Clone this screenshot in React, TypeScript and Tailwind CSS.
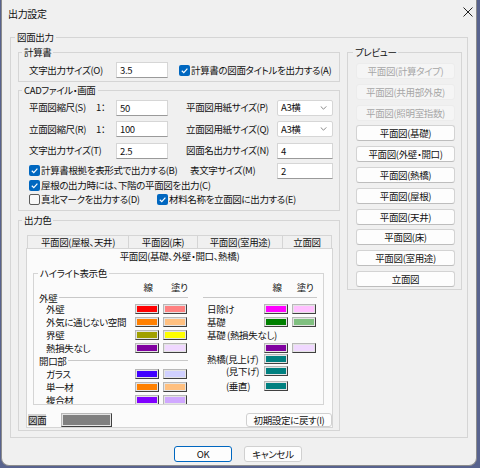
import type { ReactNode } from "react";

type Swatch = { line: string; fill?: string };

const leftRows: { kind: "section" | "row"; label: string; sw?: Swatch }[] = [
  { kind: "section", label: "外壁" },
  { kind: "row", label: "外壁", sw: { line: "bg-[#ff0000]", fill: "bg-[#ff8080]" } },
  { kind: "row", label: "外気に通じない空間", sw: { line: "bg-[#ff8000]", fill: "bg-[#ffc080]" } },
  { kind: "row", label: "界壁", sw: { line: "bg-[#a0a000]", fill: "bg-[#ffff00]" } },
  { kind: "row", label: "熱損失なし", sw: { line: "bg-[#8000a0]", fill: "bg-[#f0d8ff]" } },
  { kind: "section", label: "開口部" },
  { kind: "row", label: "ガラス", sw: { line: "bg-[#4000ff]", fill: "bg-[#d0d0ff]" } },
  { kind: "row", label: "単一材", sw: { line: "bg-[#ff8000]", fill: "bg-[#ffc080]" } },
  { kind: "row", label: "複合材", sw: { line: "bg-[#8000ff]", fill: "bg-[#d0a8ff]" } },
];

const previewButtons = [
  { label: "平面図(計算タイプ)", disabled: true },
  { label: "平面図(共用部外皮)", disabled: true },
  { label: "平面図(照明室指数)", disabled: true },
  { label: "平面図(基礎)" },
  { label: "平面図(外壁・開口)" },
  { label: "平面図(熱橋)" },
  { label: "平面図(屋根)" },
  { label: "平面図(天井)" },
  { label: "平面図(床)" },
  { label: "平面図(室用途)" },
  { label: "立面図" },
];

function Group({ label, className, legendClass, children }: { label: string; className: string; legendClass: string; children?: ReactNode }) {
  return (
    <fieldset className={`border border-[#d5d5d5] shrink-0 ${className}`}>
      <legend className={`px-[2px] leading-[14px] ${legendClass}`}>{label}</legend>
      {children}
    </fieldset>
  );
}

function Check({ checked }: { checked: boolean }) {
  if (!checked) {
    return <span className="w-[11px] h-[11px] rounded-[2px] border border-[#5c5c5c] bg-[#f8f8f8] shrink-0" />;
  }
  return (
    <span className="w-[11px] h-[11px] rounded-[2px] bg-[#0067c0] flex items-center justify-center shrink-0">
      <svg viewBox="0 0 10 10" className="w-[9px] h-[9px]">
        <path d="M2 5.3 L4.2 7.4 L8.2 2.8" fill="none" stroke="white" strokeWidth="1.3" />
      </svg>
    </span>
  );
}

function Input({ value, w }: { value: string; w: string }) {
  return (
    <span className={`${w} h-[16px] bg-white border border-[#d6d6d6] border-b-[#9a9a9a] pl-[3px] leading-[14px] shrink-0`}>
      {value}
    </span>
  );
}

function Select({ value }: { value: string }) {
  return (
    <span className="w-[56px] h-[16px] bg-white border border-[#d6d6d6] rounded-[2px] pl-[3px] pr-[5px] flex items-center justify-between shrink-0">
      <span>{value}</span>
      <svg viewBox="0 0 8 5" className="w-[7px] h-[4px]">
        <path d="M0.5 0.5 L4 4 L7.5 0.5" fill="none" stroke="#6a6a6a" strokeWidth="1" />
      </svg>
    </span>
  );
}

function Sw({ color, className = "" }: { color: string; className?: string }) {
  return (
    <span className={`block w-[24px] h-[10px] bg-[#e4e4e4] border border-[#b8b8b8] border-r-[#404040] border-b-[#404040] p-[1px] shrink-0 ${className}`}>
      <span className={`block w-full h-full ${color}`} />
    </span>
  );
}

export default function App() {
  return (
    <div className="w-[480px] h-[468px] bg-[#58638e] text-[9.5px] tracking-[-0.35px] whitespace-nowrap text-[#111] font-['Noto_Sans_CJK_JP',sans-serif] [font-feature-settings:'palt']">
      <div className="ml-[1px] w-[476px] h-[466px] bg-[#f0f0f0] border-x border-b border-[#8c8c8c] rounded-b-[8px] flex flex-col">
        {/* title bar */}
        <div className="h-[26px] shrink-0 flex items-center justify-between pl-[6px] pr-[3px]">
          <span className="text-[10px]">出力設定</span>
          <svg viewBox="0 0 10 10" className="w-[10px] h-[10px] mb-[2px]">
            <path d="M0.5 0.5 L9.5 9.5 M9.5 0.5 L0.5 9.5" stroke="#222" strokeWidth="1" />
          </svg>
        </div>

        <Group label="図面出力" className="ml-[8px] mt-[4px] w-[458px] h-[408px]" legendClass="ml-[4px]">
          <div className="flex gap-[7px] pl-[7px] mt-[1px]">
            {/* left column */}
            <div className="w-[322px] flex flex-col">
              <Group label="計算書" className="w-[322px] h-[37px]" legendClass="ml-[3px]">
                <div className="mt-[3px] pl-[10px] h-[16px] flex items-center">
                  <span className="w-[87px]">文字出力サイズ(O)</span>
                  <Input value="3.5" w="w-[52px]" />
                  <span className="ml-[11px] flex items-center gap-[1px]">
                    <Check checked />
                    <span>計算書の図面タイトルを出力する(A)</span>
                  </span>
                </div>
              </Group>

              <Group label="CADファイル・画面" className="mt-[1px] w-[322px] h-[128px]" legendClass="ml-[3px]">
                <div className="pl-[10px] flex flex-col">
                  <div className="mt-[2.5px] h-[16px] flex items-center">
                    <span className="w-[67px]">平面図縮尺(S)</span>
                    <span className="w-[20px]">1：</span>
                    <Input value="50" w="w-[52px]" />
                    <span className="ml-[18px] w-[91px]">平面図用紙サイズ(P)</span>
                    <Select value="A3横" />
                  </div>
                  <div className="mt-[5.5px] h-[16px] flex items-center">
                    <span className="w-[67px]">立面図縮尺(R)</span>
                    <span className="w-[20px]">1：</span>
                    <Input value="100" w="w-[52px]" />
                    <span className="ml-[18px] w-[91px]">立面図用紙サイズ(Q)</span>
                    <Select value="A3横" />
                  </div>
                  <div className="mt-[5.5px] h-[16px] flex items-center">
                    <span className="w-[87px]">文字出力サイズ(T)</span>
                    <Input value="2.5" w="w-[52px]" />
                    <span className="ml-[18px] w-[91px]">図面名出力サイズ(N)</span>
                    <Input value="4" w="w-[56px]" />
                  </div>
                  <div className="mt-[4px] h-[16px] flex items-center">
                    <span className="w-[161px] flex items-center gap-[1px]">
                      <Check checked />
                      <span>計算書根拠を表形式で出力する(B)</span>
                    </span>
                    <span className="w-[87px]">表文字サイズ(M)</span>
                    <Input value="2" w="w-[56px]" />
                  </div>
                  <div className="h-[13px] flex items-center gap-[1px]">
                    <Check checked />
                    <span>屋根の出力時には、下階の平面図を出力(C)</span>
                  </div>
                  <div className="h-[16px] flex items-center">
                    <span className="w-[128px] flex items-center gap-[1px]">
                      <Check checked={false} />
                      <span>真北マークを出力する(D)</span>
                    </span>
                    <span className="flex items-center gap-[1px]">
                      <Check checked />
                      <span>材料名称を立面図に出力する(E)</span>
                    </span>
                  </div>
                </div>
              </Group>

              <Group label="出力色" className="mt-[2px] w-[322px] h-[218px]" legendClass="ml-[3px]">
                <div className="pl-[7px] mt-[8px]">
                  {/* back tab row */}
                  <div className="ml-[1px] flex h-[13px]">
                    <span className="w-[101px] border-t border-l border-[#d5d5d5] text-center leading-[13px]">平面図(屋根、天井)</span>
                    <span className="w-[69px] border-t border-l border-[#d5d5d5] text-center leading-[13px]">平面図(床)</span>
                    <span className="w-[85px] border-t border-l border-[#d5d5d5] text-center leading-[13px]">平面図(室用途)</span>
                    <span className="w-[50px] border-t border-x border-[#d5d5d5] text-center leading-[13px]">立面図</span>
                  </div>
                  {/* selected tab row */}
                  <div className="w-[307px] h-[15px] border-t border-x border-[#d5d5d5] bg-[#fbfbfb] text-center leading-[14px]">
                    平面図(基礎、外壁・開口、熱橋)
                  </div>
                  {/* panel */}
                  <div className="w-[307px] h-[165px] border-x border-b border-[#d5d5d5] bg-[#fbfbfb] flex flex-col">
                    <Group label="ハイライト表示色" className="ml-[6px] mt-[3px] w-[291px] h-[139px] overflow-hidden" legendClass="ml-[4px]">
                      <div className="flex leading-[10px]">
                        {/* left colours */}
                        <div className="w-[154px] flex flex-col">
                          <div className="h-[13px] flex items-center">
                            <span className="ml-[109px] w-[10px] text-center">線</span>
                            <span className="ml-[18px] w-[16px] text-center">塗り</span>
                          </div>
                          {leftRows.map((r, i) =>
                            r.kind === "section" ? (
                              <div key={i} className={`${i === 0 ? "h-[9px]" : "h-[13px]"} flex items-center pl-[5px]`}>
                                <span>{r.label}</span>
                                <span className="ml-[2px] flex-1 h-px bg-[#c8c8c8]" />
                              </div>
                            ) : (
                              <div key={i} className="h-[13px] flex items-center">
                                <span className="pl-[12px] w-[101px]">{r.label}</span>
                                <Sw color={r.sw!.line} />
                                <Sw color={r.sw!.fill!} className="ml-[4px]" />
                              </div>
                            )
                          )}
                        </div>
                        {/* right colours */}
                        <div className="ml-[15px] w-[114px] flex flex-col">
                          <div className="h-[13px] flex items-center">
                            <span className="ml-[69px] w-[10px] text-center">線</span>
                            <span className="ml-[14px] w-[18px] text-center">塗り</span>
                          </div>
                          <div className="h-[9px] flex items-center">
                            <span className="w-full h-px bg-[#c8c8c8]" />
                          </div>
                          <div className="h-[13px] flex items-center">
                            <span className="pl-[4px] w-[61px]">日除け</span>
                            <Sw color="bg-[#ff00ff]" />
                            <Sw color="bg-[#ffc0ff]" className="ml-[4px]" />
                          </div>
                          <div className="h-[13px] flex items-center">
                            <span className="pl-[4px] w-[61px]">基礎</span>
                            <Sw color="bg-[#008000]" />
                            <Sw color="bg-[#80c080]" className="ml-[4px]" />
                          </div>
                          <div className="h-[13px] flex items-center">
                            <span className="pl-[4px]">基礎 (熱損失なし)</span>
                          </div>
                          <div className="h-[13px] flex items-center">
                            <span className="w-[61px]" />
                            <Sw color="bg-[#8000a0]" />
                            <Sw color="bg-[#f0d8ff]" className="ml-[4px]" />
                          </div>
                          <div className="h-[10px] flex items-center">
                            <span className="pl-[4px] w-[61px]">熱橋(見上げ)</span>
                            <Sw color="bg-[#008080]" />
                          </div>
                          <div className="h-[14px] flex items-center">
                            <span className="pl-[23px] w-[61px]">(見下げ)</span>
                            <Sw color="bg-[#008080]" />
                          </div>
                          <div className="h-[16px] flex items-center">
                            <span className="pl-[23px] w-[61px]">(垂直)</span>
                            <Sw color="bg-[#008080]" />
                          </div>
                        </div>
                      </div>
                    </Group>
                    <div className="mt-[8px] h-[14px] flex items-center pl-[1px]">
                      <span className="bg-[#d2d2d2] leading-[12px]">図面</span>
                      <span className="ml-[15px] w-[51px] h-[14px] bg-[#e4e4e4] border border-[#b8b8b8] border-r-[#404040] border-b-[#404040] p-[1px]">
                        <span className="block w-full h-full bg-[#808080]" />
                      </span>
                      <span className="ml-auto w-[86px] h-[14px] bg-[#fdfdfd] border border-[#d0d0d0] rounded-[3px] text-center leading-[12px]">
                        初期設定に戻す(I)
                      </span>
                    </div>
                  </div>
                </div>
              </Group>
            </div>

            {/* preview */}
            <Group label="プレビュー" className="w-[115px] h-[245px]" legendClass="ml-[5px]">
              <div className="mt-[4px] pl-[8px] flex flex-col gap-[4.8px]">
                {previewButtons.map((b) => (
                  <span
                    key={b.label}
                    className={`w-[99px] h-[16px] rounded-[3px] border text-center leading-[14px] ${
                      b.disabled
                        ? "bg-[#f5f5f5] border-[#ececec] text-[#a6a6a6]"
                        : "bg-[#fdfdfd] border-[#d3d3d3] border-b-[#bdbdbd]"
                    }`}
                  >
                    {b.label}
                  </span>
                ))}
              </div>
            </Group>
          </div>
        </Group>

        {/* dialog buttons */}
        <div className="mt-[8px] pl-[172px] flex gap-[12px]">
          <span className="w-[58px] h-[16px] bg-[#fdfdfd] border border-[#0067c0] rounded-[3px] text-center leading-[14px]">OK</span>
          <span className="w-[58px] h-[16px] bg-[#fdfdfd] border border-[#d0d0d0] rounded-[3px] text-center leading-[14px]">キャンセル</span>
        </div>
      </div>
    </div>
  );
}
